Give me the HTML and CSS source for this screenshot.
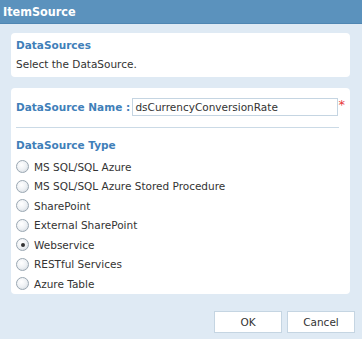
FILE: index.html
```html
<!DOCTYPE html>
<html lang="en">

<head>
    <meta charset="UTF-8">
    <title>ItemSource</title>
    <link rel="stylesheet" href="styles.css">
</head>

<body>
    <div class="dialog">
        <div class="title-bar">ItemSource</div>

        <div class="content">
            <div class="panel intro">
                <div class="heading">DataSources</div>
                <div class="hint">Select the DataSource.</div>
            </div>

            <div class="panel">
                <div class="name-row">
                    <label class="name-label" for="dsName">DataSource Name :</label>
                    <input id="dsName" class="name-input" type="text" value="dsCurrencyConversionRate">
                    <span class="required">*</span>
                </div>

                <div class="divider"></div>

                <div class="heading type-heading">DataSource Type</div>
                <ul class="type-list">
                    <li><span class="radio"></span>MS SQL/SQL Azure</li>
                    <li><span class="radio"></span>MS SQL/SQL Azure Stored Procedure</li>
                    <li><span class="radio"></span>SharePoint</li>
                    <li><span class="radio"></span>External SharePoint</li>
                    <li><span class="radio checked"></span>Webservice</li>
                    <li><span class="radio"></span>RESTful Services</li>
                    <li><span class="radio"></span>Azure Table</li>
                </ul>
            </div>

            <div class="actions">
                <button class="btn">OK</button>
                <button class="btn">Cancel</button>
            </div>
        </div>
    </div>
</body>

</html>
```

FILE: styles.css
```css
body {
    margin: 0;
    font-family: "DejaVu Sans", Verdana, sans-serif;
    font-size: 10.5px;
    color: #333;
}

.dialog {
    width: 362px;
    height: 339px;
    background: #dfeaf4;
    display: flex;
    flex-direction: column;
}

.title-bar {
    height: 24px;
    line-height: 23px;
    padding-left: 3px;
    background: #5b92bd;
    border-bottom: 1px solid #4f86b2;
    color: white;
    font-family: "DejaVu Sans Condensed", "Liberation Sans", sans-serif;
    font-size: 12.5px;
    font-weight: bold;
    box-sizing: border-box;
}

.content {
    padding: 9px 12px 0 11px;
    display: flex;
    flex-direction: column;
}

.panel {
    background: white;
    border-radius: 4px;
    padding: 5px 5px 0;
}

.intro {
    height: 44px;
    box-sizing: border-box;
    margin-bottom: 11px;
}

.heading {
    color: #3f80b9;
    font-weight: bold;
    line-height: 14px;
}

.hint {
    margin-top: 5px;
    line-height: 14px;
}

.name-row {
    display: flex;
    align-items: flex-start;
    padding-top: 5px;
}

.name-label {
    color: #3f80b9;
    font-weight: bold;
    line-height: 18px;
    width: 117px;
    white-space: nowrap;
}

.name-input {
    width: 206px;
    height: 18px;
    box-sizing: border-box;
    border: 1px solid #c5d5e2;
    padding: 0 2px;
    font-family: inherit;
    font-size: 10.5px;
    color: #333;
}

.required {
    color: #e8393b;
    font-size: 13px;
    line-height: 13px;
    margin-left: 1px;
}

.divider {
    height: 1px;
    background: #cbdae6;
    margin: 11px 6px 10px 0;
}

.type-heading {
    margin-bottom: 5px;
}

.type-list {
    list-style: none;
    margin: 0;
    padding: 0;
}

.type-list li {
    display: flex;
    align-items: center;
    height: 19.5px;
    gap: 5px;
}

.radio {
    width: 11px;
    height: 11px;
    border-radius: 50%;
    border: 1px solid #9aa7b2;
    background: radial-gradient(circle at 40% 35%, #ffffff 0%, #eef1f4 50%, #cdd4da 100%);
    position: relative;
}

.radio.checked::after {
    content: "";
    position: absolute;
    left: 3.5px;
    top: 3.5px;
    width: 4px;
    height: 4px;
    border-radius: 50%;
    background: #333;
}

.actions {
    display: flex;
    justify-content: flex-end;
    gap: 5px;
    margin-top: 17px;
    margin-right: -5px;
}

.btn {
    width: 68px;
    height: 22px;
    background: white;
    border: 1px solid #c5d5e2;
    font-family: inherit;
    font-size: 10.5px;
    color: #333;
    border-radius: 0;
}
```
